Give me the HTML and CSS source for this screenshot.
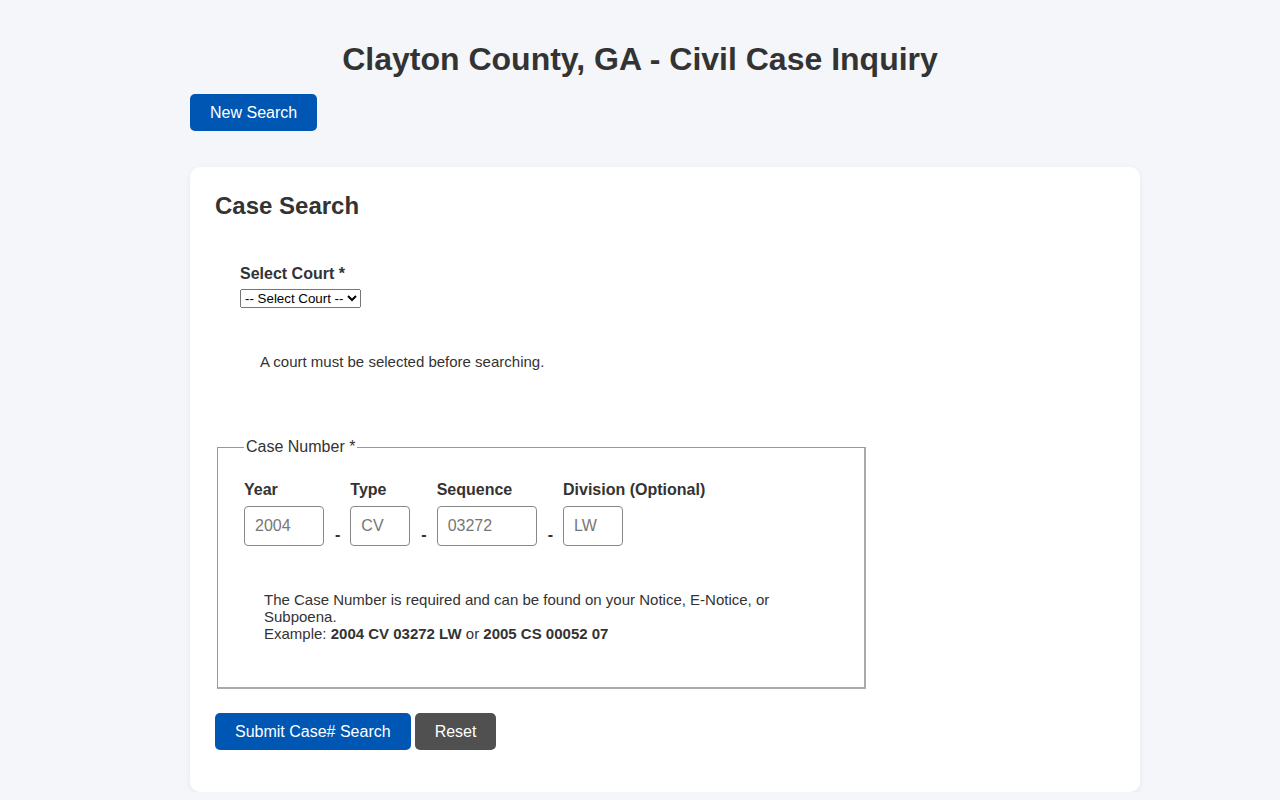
FILE: index.html
```html
<!DOCTYPE html>
<html lang="en">
<head>
  <meta charset="UTF-8" />
  <meta name="viewport" content="width=device-width, initial-scale=1.0"/>
  <title>Clayton County, GA - Civil Case Inquiry</title>
  <link rel="stylesheet" href="styles.css">
</head>
<body>

  <div class="container">
    <h1>Clayton County, GA - Civil Case Inquiry</h1>
    <button class="btn btn-primary" type="button">New Search</button>

    <!-- Search card -->
    <div class="card">
      <h2>Case Search</h2>

      <div class="court-group">
        <label class="field-label court-label" for="court">Select Court *</label>
        <select id="court">
          <option>-- Select Court --</option>
        </select>
        <p class="hint court-hint">A court must be selected before searching.</p>
      </div>

      <fieldset class="case-number">
        <legend>Case Number *</legend>
        <div class="case-row">
          <div class="case-part">
            <label class="field-label" for="year">Year</label>
            <input id="year" class="input-year" type="text" placeholder="2004">
          </div>
          <span class="dash">-</span>
          <div class="case-part">
            <label class="field-label" for="type">Type</label>
            <input id="type" class="input-short" type="text" placeholder="CV">
          </div>
          <span class="dash">-</span>
          <div class="case-part">
            <label class="field-label" for="seq">Sequence</label>
            <input id="seq" class="input-seq" type="text" placeholder="03272">
          </div>
          <span class="dash">-</span>
          <div class="case-part">
            <label class="field-label" for="div">Division (Optional)</label>
            <input id="div" class="input-short" type="text" placeholder="LW">
          </div>
        </div>
        <p class="hint case-hint">
          The Case Number is required and can be found on your Notice, E-Notice, or Subpoena.<br>
          Example: <strong>2004 CV 03272 LW</strong> or <strong>2005 CS 00052 07</strong>
        </p>
      </fieldset>

      <div class="actions">
        <button class="btn btn-primary" type="submit">Submit Case# Search</button>
        <button class="btn btn-secondary" type="reset">Reset</button>
      </div>
    </div>
  </div>

</body>
</html>
```

FILE: styles.css
```css
html, body {
  margin: 0;
  padding: 0;
}

body {
  background: #f4f6f9;
  font-family: 'Liberation Sans', Arial, sans-serif;
  color: #333;
}

.container {
  max-width: 900px;
  margin: 0 auto;
  padding-top: 41px;
}

h1 {
  font-size: 32px;
  line-height: 37px;
  text-align: center;
  margin: 0 0 16px;
  color: #333;
}

.btn {
  font-family: inherit;
  font-size: 16px;
  line-height: 17px;
  padding: 10px 20px;
  border: none;
  border-radius: 5px;
  color: #fff;
  cursor: pointer;
}

.btn-primary {
  background: #0057b3;
}

.btn-secondary {
  background: #505050;
}

/* Card */
.card {
  margin-top: 36px;
  width: 100%;
  padding: 25px 25px 42px;
  background: #fff;
  border-radius: 10px;
  box-shadow: 0 2px 6px rgba(0, 0, 0, 0.06);
}

h2 {
  font-size: 24px;
  line-height: 28px;
  margin: 0;
}

.court-group {
  margin: 45px 0 0 25px;
}

.field-label {
  display: block;
  font-size: 16px;
  line-height: 18px;
  font-weight: bold;
  margin-bottom: 7px;
}

.court-label {
  margin-bottom: 6px;
}

select {
  font-family: 'Liberation Sans', Arial, sans-serif;
  font-size: 13.33px;
}

.hint {
  font-size: 15px;
  line-height: 17px;
  margin: 0;
  padding: 20px;
}

.court-hint {
  margin-top: 25px;
}

/* Case number fieldset */
.case-number {
  box-sizing: border-box;
  width: 649px;
  margin: 48px 2px 0;
  padding: 25px 25px 25px 26px;
  border: 1px solid #999;
  border-right-width: 2px;
  border-bottom-width: 2px;
  border-right-color: #aaa;
  border-bottom-color: #aaa;
}

.case-number legend {
  font-size: 16px;
  line-height: 18px;
  padding: 0 2px;
}

.case-row {
  display: flex;
  align-items: flex-end;
}

.case-part input {
  display: block;
  box-sizing: border-box;
  height: 40px;
  padding: 10px;
  font-family: inherit;
  font-size: 16px;
  border: 1px solid #888;
  border-radius: 4px;
  color: #333;
}

.case-part input::placeholder {
  color: #777;
}

.input-year { width: 80px; }
.input-short { width: 60px; }
.input-seq { width: 100px; }

.dash {
  font-size: 16px;
  font-weight: bold;
  line-height: 18px;
  margin: 0 10px 0 11px;
  padding-bottom: 2px;
}

.case-hint {
  margin-top: 25px;
}

.actions {
  display: flex;
  gap: 4px;
  margin-top: 24px;
}
```
